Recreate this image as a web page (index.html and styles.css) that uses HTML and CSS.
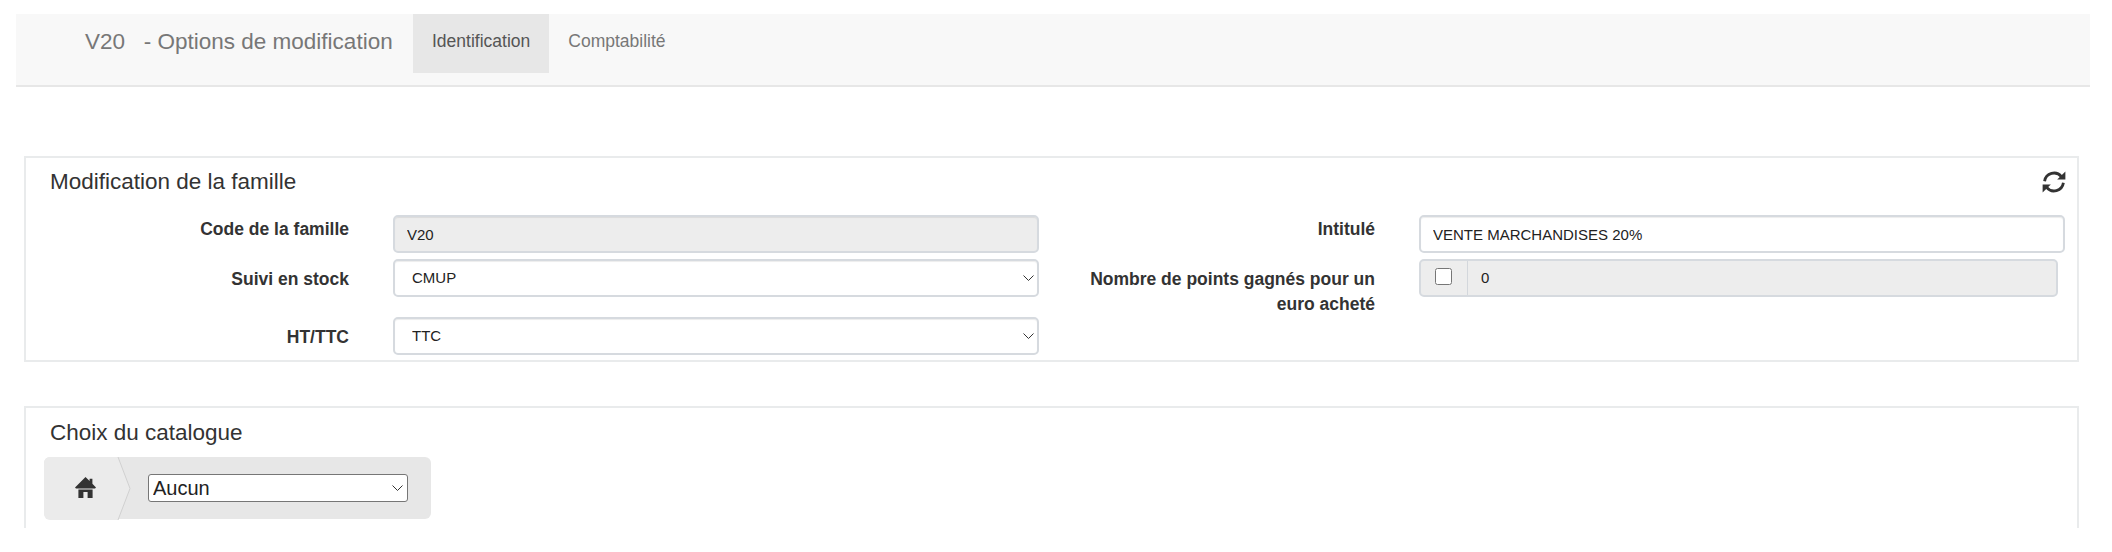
FILE: index.html
```html
<!DOCTYPE html>
<html lang="fr">
<head>
<meta charset="utf-8">
<title>V20 - Options de modification</title>
<link rel="stylesheet" href="styles.css">
</head>
<body>
<nav class="navbar">
  <div class="brand">V20 &nbsp; - Options de modification</div>
  <a class="tab active">Identification</a>
  <a class="tab">Comptabilité</a>
</nav>
<main class="content">
  <section class="panel panel-main">
    <div class="panel-head">
      <h2>Modification de la famille</h2>
      <svg class="refresh" viewBox="0 0 24 24" aria-hidden="true">
        <path class="arc" d="M2.6 11.2A9.5 9.5 0 0 1 19.4 6.6"/>
        <path class="arc" d="M21.4 12.8A9.5 9.500 0 0 1 4.6 17.4"/>
        <path class="tip" d="M23.4 1.4V9.6H15.2Z"/>
        <path class="tip" d="M.6 22.6V14.4H8.8Z"/>
      </svg>
    </div>
    <div class="form-grid">
      <div class="col">
        <div class="row row-a">
          <label class="lbl">Code de la famille</label>
          <div class="ctl"><input class="field" value="V20" disabled></div>
        </div>
        <div class="row row-b">
          <label class="lbl">Suivi en stock</label>
          <div class="ctl"><select class="field sel"><option>CMUP</option></select></div>
        </div>
        <div class="row row-c">
          <label class="lbl">HT/TTC</label>
          <div class="ctl"><select class="field sel"><option>TTC</option></select></div>
        </div>
      </div>
      <div class="col col-right">
        <div class="row row-a">
          <label class="lbl">Intitulé</label>
          <div class="ctl"><input class="field" value="VENTE MARCHANDISES 20%"></div>
        </div>
        <div class="row row-b">
          <label class="lbl">Nombre de points gagnés pour un euro acheté</label>
          <div class="ctl ctl-short">
            <div class="group">
              <span class="addon"><input type="checkbox" class="check"></span>
              <span class="group-val">0</span>
            </div>
          </div>
        </div>
      </div>
    </div>
  </section>
  <section class="panel panel-cat">
    <h2>Choix du catalogue</h2>
    <div class="crumb">
      <div class="home">
        <svg class="home-icon" viewBox="0 0 21 21" aria-hidden="true"><path d="M10.5 0L14.6 4V1.8H17.4V6.8L21 10.4 20 11.6H1L0 10.4Z"/><path d="M3.4 12.4H17.6V21H12.6V15H8.4V21H3.4Z"/></svg>
      </div>
      <svg class="chevron" viewBox="0 0 14 63" preserveAspectRatio="none" aria-hidden="true"><path d="M1 0L13 31.500 1 63"/></svg>
      <select class="cat-select"><option>Aucun</option></select>
    </div>
  </section>
</main>
</body>
</html>
```

FILE: styles.css
```css
* { box-sizing: border-box; }
html, body { margin: 0; padding: 0; background: #fff; }
body {
  height: 552px;
  overflow: hidden;
  padding: 14px 22px 0 16px;
  font-family: "Liberation Sans", Arial, sans-serif;
  color: #333;
}
.navbar {
  display: flex;
  align-items: flex-start;
  height: 73px;
  background: #f8f8f8;
  border-bottom: 2px solid #e7e7e7;
  color: #777;
}
.brand {
  width: 397px;
  height: 59px;
  padding-left: 69px;
  font-size: 22.5px;
  line-height: 56px;
  white-space: nowrap;
}
.tab {
  height: 59px;
  padding: 0 19px;
  font-size: 17.5px;
  line-height: 54px;
  color: #777;
}
.tab.active { background: #e7e7e7; color: #555; }
.content {
  padding: 69px 11px 0 8px;
}
.panel {
  border: 2px solid #e9ebec;
  background: #fff;
}
.panel-main { height: 206px; padding: 0 12px 0 0; }
.panel-cat {
  height: 122px;
  margin-top: 44px;
  padding: 0 18px;
  border-bottom: 0;
}
h2 {
  margin: 0;
  font-size: 22.5px;
  font-weight: 400;
  color: #333;
  line-height: 1;
}
.panel-head {
  display: flex;
  justify-content: space-between;
  align-items: center;
  height: 57px;
  padding: 0 0 9px 24px;
}
.refresh { width: 24px; height: 24px; flex: none; margin-right: -1px; }
.refresh .arc { fill: none; stroke: #333; stroke-width: 2.8; }
.refresh .tip { fill: #333; }
.form-grid {
  display: grid;
  grid-template-columns: 1013px 1fr;
}
.col { min-width: 0; }
.row { display: flex; align-items: flex-start; }
.row-a { height: 44px; }
.row-b { height: 58px; }
.row-c { height: 38px; }
.lbl {
  flex: none;
  width: 323px;
  padding-top: 8px;
  font-size: 17.5px;
  font-weight: 700;
  line-height: 25px;
  text-align: right;
  color: #333;
}
.row-a .lbl { padding-top: 2px; }
.col-right .lbl { width: 336px; padding-left: 40px; }
.ctl { flex: 1; margin-left: 44px; min-width: 0; }
.ctl-short { padding-right: 7px; }
.field {
  display: block;
  width: 100%;
  height: 38px;
  padding: 0 12px;
  font: 400 15px "Liberation Sans", Arial, sans-serif;
  color: #222;
  background: #fff;
  border: 2px solid #d6dadf;
  border-radius: 5px;
  box-shadow: inset 0 1px 1px rgba(0, 0, 0, .075);
  outline: 0;
}
.field:disabled { background: #ededed; color: #222; opacity: 1; }
.sel {
  appearance: none;
  padding: 0 0 2px 17px;
  background-image: url("data:image/svg+xml;utf8,<svg xmlns='http://www.w3.org/2000/svg' width='11' height='6' viewBox='0 0 11 6'><path d='M.5.5L5.5 5.5 10.500.5' fill='none' stroke='%23333' stroke-width='1'/></svg>");
  background-repeat: no-repeat;
  background-position: right 3px center;
}
.group {
  display: flex;
  height: 38px;
  background: #ededed;
  border: 2px solid #d6dadf;
  border-radius: 5px;
}
.addon {
  display: flex;
  align-items: center;
  justify-content: center;
  width: 47px;
  border-right: 1px solid #d3d7dc;
}
.check { width: 17px; height: 17px; margin: 0 2px 4px 0; }
.group-val { padding-left: 13px; font-size: 15px; line-height: 34px; color: #222; }
.panel-cat h2 { padding: 12px 0 0 6px; height: 49px; line-height: 26px; }
.crumb {
  position: relative;
  display: flex;
  align-items: center;
  width: 387px;
  height: 62px;
  background: #e7e7e7;
  border-radius: 6px;
}
.home {
  display: flex;
  align-items: center;
  flex: none;
  width: 104px;
  height: 63px;
  margin-top: 1px;
  padding-left: 31px;
  background: #ebebeb;
  border-radius: 6px 0 0 6px;
  clip-path: polygon(0 0, 74px 0, 86px 50%, 74px 100%, 0 100%);
}
.home-icon { width: 21px; height: 21px; fill: #333; margin-bottom: 2px; }
.chevron {
  position: absolute;
  left: 73px;
  top: 0;
  width: 14px;
  height: 63px;
  fill: none;
  stroke: #d0d0d0;
  stroke-width: 1;
}
.cat-select {
  appearance: none;
  width: 260px;
  height: 28px;
  padding: 0 0 0 4px;
  font: 400 20px "Liberation Sans", Arial, sans-serif;
  color: #222;
  background-color: #fff;
  background-image: url("data:image/svg+xml;utf8,<svg xmlns='http://www.w3.org/2000/svg' width='11' height='6' viewBox='0 0 11 6'><path d='M.5.5L5.5 5.5 10.500.5' fill='none' stroke='%23333' stroke-width='1'/></svg>");
  background-repeat: no-repeat;
  background-position: right 4px center;
  border: 1px solid #767676;
  border-radius: 3px;
}
```
